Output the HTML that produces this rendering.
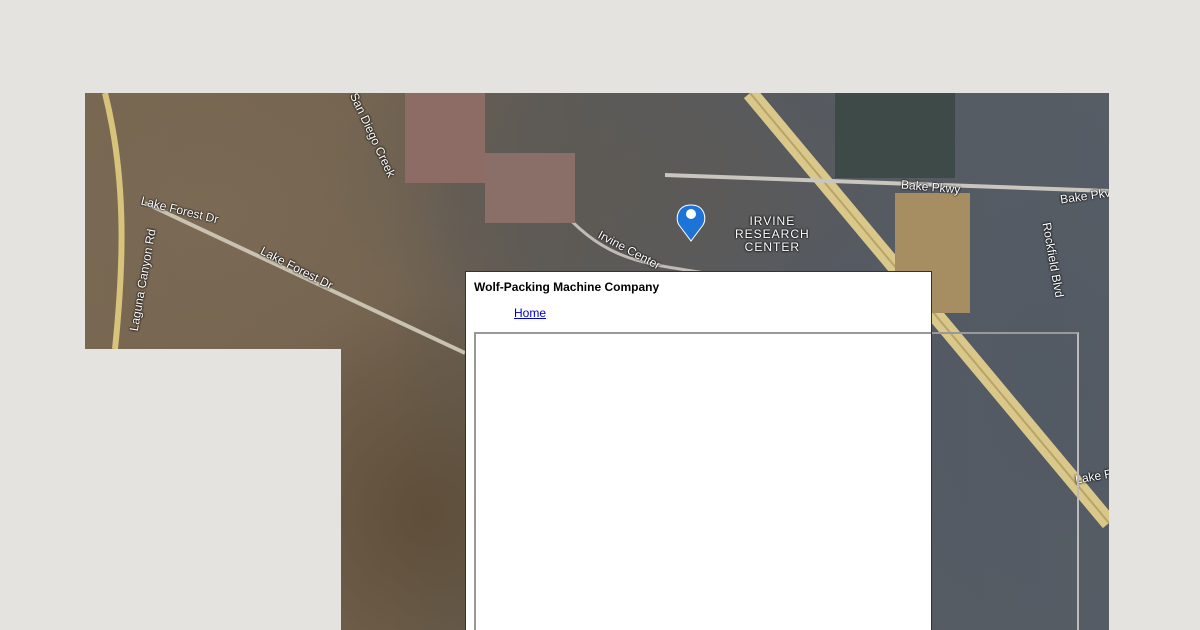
<!DOCTYPE html>
<html style="height:630px;overflow:hidden"><head><meta charset="utf-8"><style>
html,body{margin:0;height:630px;overflow:hidden}
body{width:1200px;background:#e5e3df;position:relative;font-family:"Liberation Sans",Arial,sans-serif}
#map{position:absolute;left:85px;top:93px;width:1024px;height:537px;overflow:hidden;
background:
radial-gradient(ellipse 260px 200px at 120px 120px,#7a6a55,transparent),
radial-gradient(ellipse 200px 220px at 340px 420px,#5e4e3a,transparent),
radial-gradient(ellipse 300px 140px at 520px 90px,#5d5a56,transparent),
radial-gradient(ellipse 200px 300px at 960px 300px,#525a64,transparent),
linear-gradient(90deg,#786650 0%,#736350 30%,#5e5a55 45%,#555a61 70%,#575d65 100%)}
.lbl{position:absolute;color:#fff;font-size:12px;text-shadow:0 0 2px #000,0 0 2px #000;white-space:nowrap}
#cut{position:absolute;left:85px;top:349px;width:256px;height:281px;background:#e5e3df}
#panel{position:absolute;left:465px;top:271px;width:465px;height:370px;background:#fff;border:1px solid #333}
#inner{position:absolute;left:474px;top:332px;width:601px;height:320px;border:2px solid #999;border-right-color:#bbb}
</style></head><body>
<div id="map">
<svg width="1024" height="537" style="position:absolute;left:0;top:0">
<path d="M20 0 C40 80 40 160 30 256" stroke="#d8c37a" stroke-width="6" fill="none"/>
<path d="M665 0 L1024 430" stroke="#d9c88a" stroke-width="16" fill="none"/>
<path d="M665 0 L1024 430" stroke="#b8a468" stroke-width="2" fill="none"/>
<path d="M60 110 L380 260" stroke="#c9c2b0" stroke-width="4" fill="none"/>
<path d="M580 82 L1024 98" stroke="#c9c6bf" stroke-width="4" fill="none"/>
<path d="M470 110 C520 170 560 170 620 180" stroke="#c0bcb5" stroke-width="3" fill="none"/>
<rect x="750" y="0" width="120" height="85" fill="#3d4a48"/>
<rect x="810" y="100" width="75" height="120" fill="#a78d62"/>
<rect x="320" y="0" width="80" height="90" fill="#8d6c65"/>
<rect x="400" y="60" width="90" height="70" fill="#8a6f69"/>
<path d="M606 112 c-14 0 -16 14 -12 20 l12 16 12 -16 c4 -6 2 -20 -12 -20z" fill="#1e73d6" stroke="#fff" stroke-width="1"/>
<circle cx="606" cy="121" r="5" fill="#fff"/>
</svg>
<div class="lbl" style="left:55px;top:110px;transform:rotate(14deg)">Lake Forest Dr</div>
<div class="lbl" style="left:172px;top:168px;transform:rotate(27deg)">Lake Forest Dr</div>
<div class="lbl" style="left:6px;top:180px;transform:rotate(-80deg)">Laguna Canyon Rd</div>
<div class="lbl" style="left:242px;top:35px;transform:rotate(65deg)">San Diego Creek</div>
<div class="lbl" style="left:510px;top:150px;transform:rotate(28deg)">Irvine Center</div>
<div class="lbl" style="left:650px;top:122px;line-height:13px;text-align:center;letter-spacing:1px">IRVINE<br>RESEARCH<br>CENTER</div>
<div class="lbl" style="left:816px;top:87px;transform:rotate(5deg)">Bake Pkwy</div>
<div class="lbl" style="left:975px;top:96px;transform:rotate(-8deg)">Bake Pkv</div>
<div class="lbl" style="left:930px;top:160px;transform:rotate(80deg)">Rockfield Blvd</div>
<div class="lbl" style="left:990px;top:376px;transform:rotate(-10deg)">Lake Fo</div>
</div>
<div id="cut"></div>
<div id="inner"></div>
<div id="panel">
<div style="position:absolute;left:8px;top:8px;font-size:12px;font-weight:bold;color:#000">Wolf-Packing Machine Company</div>
<a style="position:absolute;left:48px;top:34px;font-size:12px;color:#00c;text-decoration:underline">Home</a>
<div style="position:absolute;left:8px;top:60px;width:455px;height:320px;border-top:2px solid #999;border-left:2px solid #999"></div>
</div>
</body></html>
